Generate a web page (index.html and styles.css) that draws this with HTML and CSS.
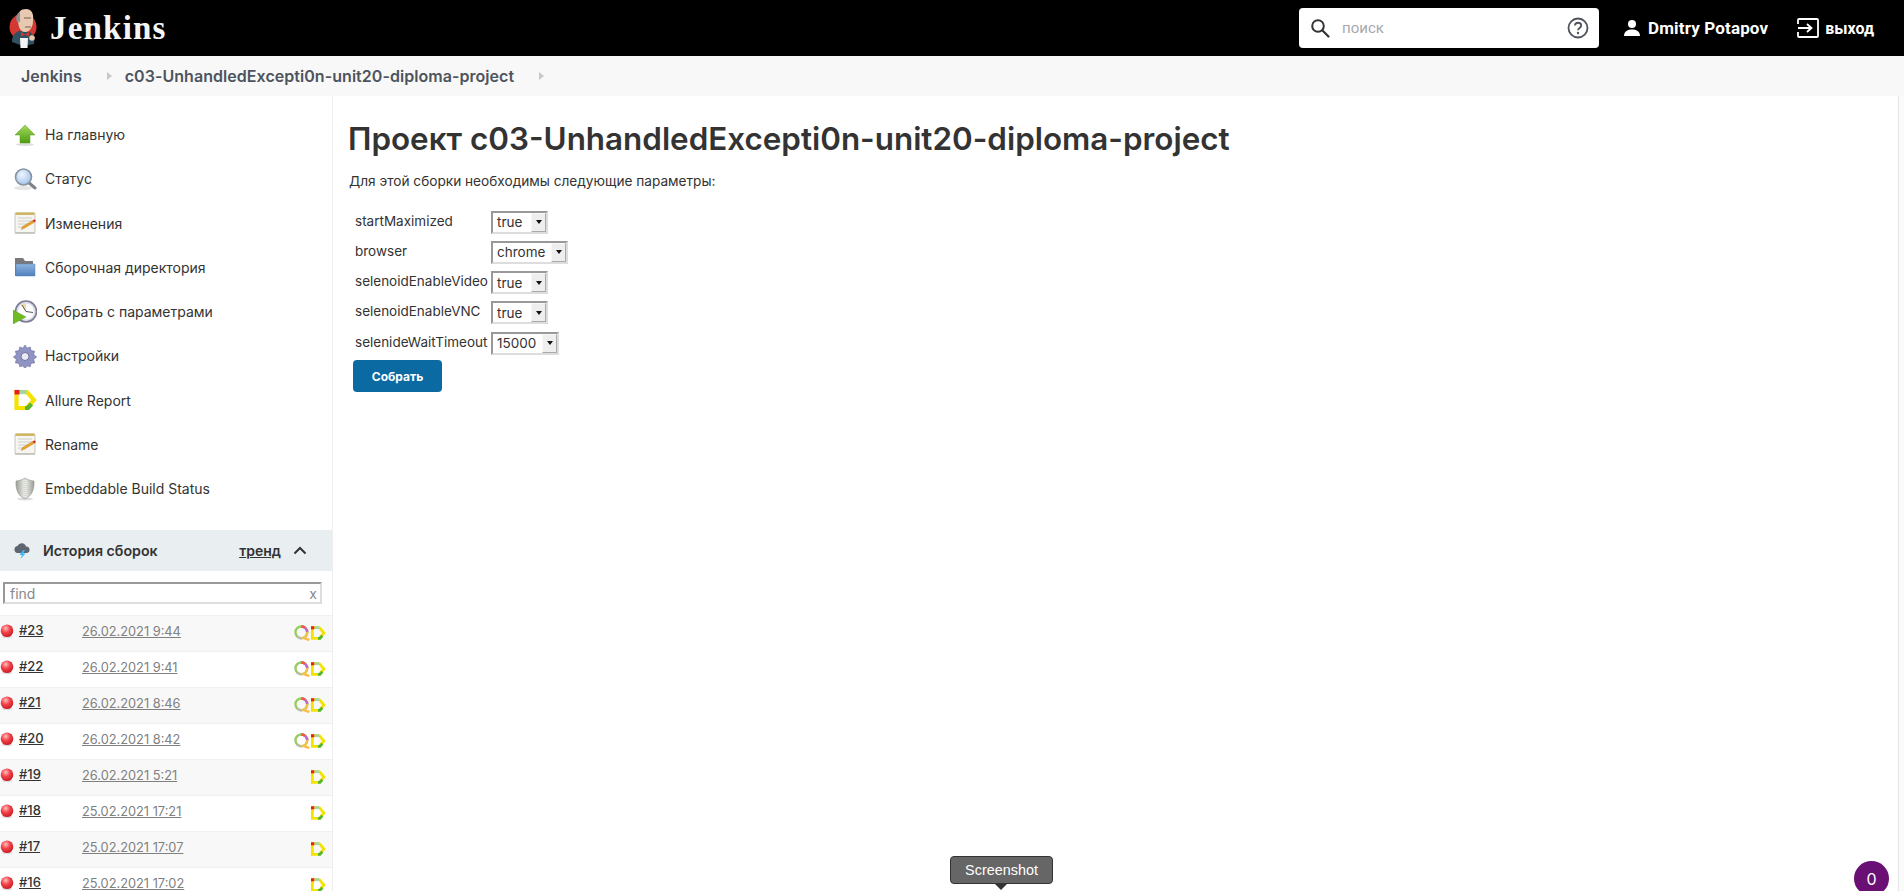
FILE: index.html
```html
<!DOCTYPE html>
<html lang="ru">
<head>
<meta charset="utf-8">
<title>Jenkins</title>
<link rel="stylesheet" href="styles.css">
</head>
<body>
<svg class="defs" aria-hidden="true">
  <defs>
    <linearGradient id="gGreen" x1="0" y1="0" x2="0" y2="1"><stop offset="0" stop-color="#a4dc5c"/><stop offset="1" stop-color="#4f9a12"/></linearGradient>
    <linearGradient id="gFolder" x1="0" y1="0" x2="0" y2="1"><stop offset="0" stop-color="#8eb4e0"/><stop offset="1" stop-color="#4f80bd"/></linearGradient>
    <linearGradient id="gShield" x1="0" y1="0" x2="1" y2="0"><stop offset="0" stop-color="#9a9e95"/><stop offset=".5" stop-color="#eeeeea"/><stop offset="1" stop-color="#9a9e95"/></linearGradient>
    <radialGradient id="gBall" cx=".4" cy=".3" r=".75"><stop offset="0" stop-color="#ffc0c0"/><stop offset=".45" stop-color="#f2444a"/><stop offset="1" stop-color="#c4181e"/></radialGradient>
    <radialGradient id="gLens" cx=".4" cy=".35" r=".7"><stop offset="0" stop-color="#eef6ff"/><stop offset="1" stop-color="#9fc0ea"/></radialGradient>
    <symbol id="i-up" viewBox="0 0 24 24"><ellipse cx="12" cy="21.5" rx="9" ry="1.5" fill="#ddd"/><path d="M12 2 L22 12 H17 V20 H7 V12 H2 Z" fill="url(#gGreen)" stroke="#5a9e1c" stroke-width=".5"/></symbol>
    <symbol id="i-search" viewBox="0 0 24 24"><ellipse cx="10" cy="21" rx="9" ry="2" fill="#e6e6e6"/><path d="M15 15 L22 21" stroke="#7d8288" stroke-width="3" stroke-linecap="round"/><circle cx="10.500" cy="10" r="8" fill="url(#gLens)" stroke="#8a949f" stroke-width="1.600"/></symbol>
    <symbol id="i-notes" viewBox="0 0 24 24"><rect x="2" y="2" width="20" height="20" rx="1" fill="#f6f5ef" stroke="#b3b1a6" stroke-width=".7"/><rect x="2.500" y="1.500" width="19" height="2.400" fill="#cdb45c"/><path d="M5 7h14M5 10h14M5 13h10M5 16h6" stroke="#c4c4c4" stroke-width=".8"/><path d="M8 18.500 L9.500 15.500 L19.500 9.500 L21 11.500 L11 17.500 Z" fill="#e8a12c" stroke="#a5761f" stroke-width=".3"/><path d="M19.500 9.500 L21 11.500 L23 10 L21.500 8.200 Z" fill="#d4312a"/><rect x="2" y="21" width="20" height="1.800" fill="#c5c5c0"/></symbol>
    <symbol id="i-folder" viewBox="0 0 24 24"><path d="M2 3 H10 L12 6 H20 V21 H2 Z" fill="#77797c"/><path d="M3 9 H22 V21 H3 Z" fill="url(#gFolder)" stroke="#5d86ba" stroke-width=".5"/></symbol>
    <symbol id="i-clock" viewBox="0 0 24 24"><circle cx="13" cy="11.500" r="10.500" fill="#dcdbe8" stroke="#7c7a95" stroke-width="1.600"/><circle cx="13" cy="11.500" r="8" fill="#fdfdfd"/><path d="M13 11.500 L8 5 A8 8 0 0 1 13 3.500 Z" fill="#f1dca0"/><path d="M13 11.500 L9 5 M13 11.500 L20 12.500" stroke="#555" stroke-width="1"/><path d="M0 10 L13 17 L0 24 Z" fill="#6fbb22" stroke="#4f9412" stroke-width=".4"/></symbol>
    <symbol id="i-gear" viewBox="0 0 24 24"><path d="M12 1 l2 3.200 3.200-1.200 .8 3.600 3.600 .6 -1 3.400 3 2.400 -3 2.400 1 3.400 -3.600 .6 -.8 3.400 -3.200-1 -2 2.800 -2-2.800 -3.200 1 -.8-3.400 -3.600-.6 1-3.400 -3-2.400 3-2.400 -1-3.400 3.600-.6 .8-3.600 3.200 1.200 Z" fill="#9094c4" stroke="#666a94" stroke-width=".6"/><circle cx="12" cy="12.500" r="4" fill="#e9e9f5" stroke="#6d7098"/></symbol>
    <symbol id="i-allure" viewBox="0 0 24 24"><path d="M3.500 4 H14 L21 12 L14 20 H3.500 Z" fill="none" stroke="#f6e200" stroke-width="4.200"/><path d="M1.500 1.900 H6.500 V6.500 H1.500 Z" fill="#e8201c"/><path d="M7 4 H13.500" stroke="#a5d6a0" stroke-width="4.200"/><path d="M12 20 H15 L18.500 16" fill="none" stroke="#5cb531" stroke-width="4.200"/></symbol>
    <symbol id="i-ring" viewBox="0 0 24 24"><circle cx="11" cy="11" r="8.800" fill="none" stroke="#9acb5e" stroke-width="3.600"/><path d="M5 17.500 A8.800 8.800 0 0 0 11 19.800" fill="none" stroke="#bbb" stroke-width="3.600"/><path d="M11 2.200 A8.800 8.800 0 0 1 19.800 11" fill="none" stroke="#c864c8" stroke-width="3.600"/><path d="M11 2.200 A8.800 8.800 0 0 1 16 3.800" fill="none" stroke="#ee5a3c" stroke-width="3.600"/><path d="M19.800 11 A8.800 8.800 0 0 1 14 19.400 L23 22.500" fill="none" stroke="#f6c04a" stroke-width="3.600"/></symbol>
    <symbol id="i-shield" viewBox="0 0 24 24"><ellipse cx="12" cy="22" rx="8" ry="1.400" fill="#ddd"/><path d="M12 1 C15 3 18 3.600 21 4 C21.500 12 19 19 12 22 C5 19 2.500 12 3 4 C6 3.600 9 3 12 1 Z" fill="url(#gShield)" stroke="#8f9389" stroke-width=".6"/><path d="M12 2 V21" stroke="#aaa" stroke-width=".6" stroke-dasharray="1 1"/></symbol>
    <symbol id="i-weather" viewBox="0 0 18 16"><path d="M4 10 A3.600 3.600 0 0 1 4.500 3 A4.500 4.500 0 0 1 13 3.500 A3.300 3.300 0 0 1 14 10 Z" fill="#5d6670"/><path d="M10 7 L6.500 12 H9 L7.500 16 L12.500 10.500 H10 L12 7 Z" fill="#3fb7f2"/></symbol>
    <symbol id="i-ball" viewBox="0 0 14 14"><ellipse cx="7" cy="13" rx="5.500" ry="1" fill="#ddd"/><circle cx="7" cy="6.800" r="6.300" fill="url(#gBall)"/></symbol>
  </defs>
</svg>
<div class="page">
  <header class="topbar">
    <div class="brand">
      <svg class="butler" viewBox="0 0 30 40" aria-hidden="true">
        <circle cx="14" cy="19" r="13.500" fill="#d33833"/>
        <path d="M3 34 C3 28 5 25 10 23 L21 24 C25 27 26 31 25 36 L14 38 Z" fill="#335061"/>
        <path d="M9 11 C8 4 12 1 17 1 C23 1 25 6 24 13 C24 19 21 24 16 24 C11 24 9 18 9 11 Z" fill="#e6c9b0"/>
        <path d="M8 14 C6 9 8 5 11 4 L11 14 Z" fill="#8f8f8f"/>
        <path d="M15 10 H22 M16 19 H22" stroke="#7a5a4a" stroke-width="1"/>
        <path d="M12 24 L16 26.500 L20 24 L20 28.500 L16 26.500 L12 28.500 Z" fill="#d33833"/>
        <path d="M11 30 H19 L18.500 40 H11.500 Z" fill="#f4f4f4"/>
        <circle cx="23" cy="30" r="2.800" fill="#e6c9b0"/>
      </svg>
      <span class="wordmark">Jenkins</span>
    </div>
    <div class="search">
      <svg class="search-ico" viewBox="0 0 20 20" aria-hidden="true"><circle cx="8" cy="8" r="5.800" fill="none" stroke="#333" stroke-width="2"/><path d="M12.500 12.500 L18.500 18.500" stroke="#333" stroke-width="2.200" stroke-linecap="round"/></svg>
      <span class="search-ph">поиск</span>
      <svg class="help-ico" viewBox="0 0 22 22" aria-hidden="true"><circle cx="11" cy="11" r="9.500" fill="none" stroke="#4d545d" stroke-width="1.800"/><path d="M8 8.500 C8 4.800 14.200 4.800 14.200 8.500 C14.200 11 11 10.800 11 13.300" fill="none" stroke="#4d545d" stroke-width="1.800"/><circle cx="11" cy="16" r="1.200" fill="#4d545d"/></svg>
    </div>
    <div class="user">
      <svg class="user-ico" viewBox="0 0 18 18" aria-hidden="true"><circle cx="9" cy="5" r="4" fill="#fff"/><path d="M1 17 C1 12 5 10.500 9 10.500 C13 10.500 17 12 17 17 Z" fill="#fff"/></svg>
      <span>Dmitry Potapov</span>
    </div>
    <div class="logout">
      <svg class="logout-ico" viewBox="0 0 22 20" aria-hidden="true"><path d="M1 6 V2 Q1 1 2 1 H20 Q21 1 21 2 V18 Q21 19 20 19 H2 Q1 19 1 18 V14" fill="none" stroke="#fff" stroke-width="1.800"/><path d="M1 10 H14 M10 6 L14.500 10 L10 14" fill="none" stroke="#fff" stroke-width="1.800"/></svg>
      <span>выход</span>
    </div>
  </header>

  <nav class="crumbs">
    <span class="crumb">Jenkins</span>
    <span class="crumb-arrow"></span>
    <span class="crumb">c03-UnhandledExcepti0n-unit20-diploma-project</span>
    <span class="crumb-arrow"></span>
  </nav>

  <div class="body-row">
    <aside class="sidebar">
      <ul class="tasks">
        <li class="task"><svg class="task-ico"><use href="#i-up"/></svg><span>На главную</span></li>
        <li class="task"><svg class="task-ico"><use href="#i-search"/></svg><span>Статус</span></li>
        <li class="task"><svg class="task-ico"><use href="#i-notes"/></svg><span>Изменения</span></li>
        <li class="task"><svg class="task-ico"><use href="#i-folder"/></svg><span>Сборочная директория</span></li>
        <li class="task"><svg class="task-ico"><use href="#i-clock"/></svg><span>Собрать с параметрами</span></li>
        <li class="task"><svg class="task-ico"><use href="#i-gear"/></svg><span>Настройки</span></li>
        <li class="task"><svg class="task-ico"><use href="#i-allure"/></svg><span>Allure Report</span></li>
        <li class="task"><svg class="task-ico"><use href="#i-notes"/></svg><span>Rename</span></li>
        <li class="task"><svg class="task-ico"><use href="#i-shield"/></svg><span>Embeddable Build Status</span></li>
      </ul>

      <div class="history-head">
        <svg class="weather"><use href="#i-weather"/></svg>
        <span class="history-title">История сборок</span>
        <span class="trend">тренд</span>
        <svg class="chevron" viewBox="0 0 14 9" aria-hidden="true"><path d="M1.500 7.500 L7 2 L12.500 7.500" fill="none" stroke="#333" stroke-width="2"/></svg>
      </div>
      <div class="find-wrap"><div class="find"><span>find</span><span>x</span></div></div>

      <div class="builds">
        <div class="build"><svg class="ball"><use href="#i-ball"/></svg><span class="num">#23</span><span class="date">26.02.2021 9:44</span><span class="badges"><svg class="b-ico"><use href="#i-ring"/></svg><svg class="b-ico"><use href="#i-allure"/></svg></span></div>
        <div class="build"><svg class="ball"><use href="#i-ball"/></svg><span class="num">#22</span><span class="date">26.02.2021 9:41</span><span class="badges"><svg class="b-ico"><use href="#i-ring"/></svg><svg class="b-ico"><use href="#i-allure"/></svg></span></div>
        <div class="build"><svg class="ball"><use href="#i-ball"/></svg><span class="num">#21</span><span class="date">26.02.2021 8:46</span><span class="badges"><svg class="b-ico"><use href="#i-ring"/></svg><svg class="b-ico"><use href="#i-allure"/></svg></span></div>
        <div class="build"><svg class="ball"><use href="#i-ball"/></svg><span class="num">#20</span><span class="date">26.02.2021 8:42</span><span class="badges"><svg class="b-ico"><use href="#i-ring"/></svg><svg class="b-ico"><use href="#i-allure"/></svg></span></div>
        <div class="build"><svg class="ball"><use href="#i-ball"/></svg><span class="num">#19</span><span class="date">26.02.2021 5:21</span><span class="badges"><svg class="b-ico"><use href="#i-allure"/></svg></span></div>
        <div class="build"><svg class="ball"><use href="#i-ball"/></svg><span class="num">#18</span><span class="date">25.02.2021 17:21</span><span class="badges"><svg class="b-ico"><use href="#i-allure"/></svg></span></div>
        <div class="build"><svg class="ball"><use href="#i-ball"/></svg><span class="num">#17</span><span class="date">25.02.2021 17:07</span><span class="badges"><svg class="b-ico"><use href="#i-allure"/></svg></span></div>
        <div class="build"><svg class="ball"><use href="#i-ball"/></svg><span class="num">#16</span><span class="date">25.02.2021 17:02</span><span class="badges"><svg class="b-ico"><use href="#i-allure"/></svg></span></div>
      </div>
    </aside>

    <main class="content">
      <h1 class="title">Проект c03-UnhandledExcepti0n-unit20-diploma-project</h1>
      <p class="lead">Для этой сборки необходимы следующие параметры:</p>
      <div class="params">
        <span class="p-label">startMaximized</span>
        <div class="select"><span class="s-value">true</span><span class="s-btn"></span></div>
        <span class="p-label">browser</span>
        <div class="select"><span class="s-value">chrome</span><span class="s-btn"></span></div>
        <span class="p-label">selenoidEnableVideo</span>
        <div class="select"><span class="s-value">true</span><span class="s-btn"></span></div>
        <span class="p-label">selenoidEnableVNC</span>
        <div class="select"><span class="s-value">true</span><span class="s-btn"></span></div>
        <span class="p-label">selenideWaitTimeout</span>
        <div class="select"><span class="s-value">15000</span><span class="s-btn"></span></div>
      </div>
      <button class="build-btn" type="button">Собрать</button>
    </main>
    <div class="scrollbar"></div>
  </div>

  <div class="tooltip">Screenshot</div>
  <div class="counter">0</div>
</div>
</body>
</html>
```
FILE: styles.css
```css
* { box-sizing: border-box; }
html, body { margin: 0; padding: 0; height: 100%; overflow: hidden; background: #fff; }
body { font-family: Inter, "Noto Sans", sans-serif; font-size: 14px; color: #333; }
.defs { display: block; width: 0; height: 0; }
.page { position: relative; height: 891px; display: flex; flex-direction: column; overflow: hidden; }

.topbar { flex: 0 0 56px; background: #000; display: flex; align-items: center; padding-left: 9px; color: #fff; }
.brand { display: flex; align-items: center; gap: 11px; margin-right: auto; }
.butler { width: 30px; height: 40px; }
.wordmark { font-family: "Liberation Serif", serif; font-weight: 700; font-size: 33px; letter-spacing: 1.2px; color: #f5f5f5; }
.search { width: 300px; height: 40px; background: #fff; border-radius: 4px; display: flex; align-items: center; padding: 0 10px 0 11px; margin-right: 24px; }
.search-ico { width: 20px; height: 20px; margin-right: 12px; }
.search-ph { flex: 1; font-family: Roboto, sans-serif; font-size: 15px; color: #a8a8ad; }
.help-ico { width: 22px; height: 22px; }
.user { display: flex; align-items: center; gap: 7px; font-family: Roboto, sans-serif; font-weight: 700; font-size: 17px; letter-spacing: .15px; margin-right: 29px; }
.user-ico { width: 18px; height: 18px; }
.logout { display: flex; align-items: center; gap: 6px; font-family: Roboto, sans-serif; font-weight: 700; font-size: 16px; margin-right: 30px; }
.logout-ico { width: 22px; height: 20px; }

.crumbs { flex: 0 0 40px; background: #f8f8f8; display: flex; align-items: center; padding-left: 21px; font-size: 16px; font-weight: 600; color: #4d545d; }
.crumb { letter-spacing: .05px; }
.crumb-arrow { width: 0; height: 0; margin: 0 13px 0 25px; border-left: 5px solid #c9c9c9; border-top: 4px solid transparent; border-bottom: 4px solid transparent; }

.body-row { flex: 1; min-height: 0; display: flex; }
.sidebar { flex: 0 0 333px; border-right: 1px solid #eee; overflow: hidden; }
.tasks { list-style: none; margin: 0; padding: 16.5px 0 0; }
.task { height: 44.25px; display: flex; align-items: center; padding-left: 13px; gap: 8px; color: #333; }
.task-ico { width: 24px; height: 24px; flex: none; }

.history-head { height: 41px; margin-top: 19.5px; background: #e9eef1; display: flex; align-items: center; padding: 0 25px 0 13px; font-weight: 600; }
.weather { width: 18px; height: 16px; margin-right: 12px; }
.history-title { margin-right: auto; font-size: 14.2px; }
.trend { text-decoration: underline; margin-right: 12px; }
.chevron { width: 14px; height: 9px; }
.find-wrap { padding: 11px 10px 11px 3px; }
.find { height: 22px; border: 2px solid; border-color: #999 #ddd #ddd #999; display: flex; justify-content: space-between; align-items: center; padding: 0 3px 0 5px; color: #888; }

.build { height: 36px; display: flex; align-items: center; border-top: 1px solid #eef0f1; padding: 0 6px 5px 0; }
.build:nth-child(odd) { background: #f8f8f8; }
.ball { width: 14px; height: 14px; flex: none; margin-right: 5px; }
.num { width: 63px; font-size: 13px; font-weight: 500; text-decoration: underline; color: #333; margin-top: -3px; }
.date { flex: 1; font-size: 12.8px; color: #808080; text-decoration: underline; }
.badges { display: flex; align-items: center; margin-top: 4px; }
.b-ico { width: 16px; height: 16px; }

.content { flex: 1; min-width: 0; padding: 23px 0 0 15px; }
.title { margin: 0; font-size: 31.4px; line-height: 40px; font-weight: 600; color: #333; }
.lead { margin: 12px 0 0 1px; line-height: 20px; font-size: 13.65px; }
.params { display: grid; grid-template-columns: 136px auto; grid-auto-rows: 30.250px; justify-content: start; justify-items: start; align-items: center; margin: 16px 0 0 7px; font-size: 13.5px; }
.p-label { margin-top: -3px; white-space: nowrap; }
.select { min-width: 57px; height: 23px; display: flex; align-items: center; border: 2px solid; border-color: #999 #ddd #ddd #999; background: #fff; padding-left: 4px; }
.s-value { flex: 1; padding-right: 6px; }
.s-btn { width: 15px; height: 19px; background: #eee; border: 1px solid; border-color: #f8f8f8 #aaa #aaa #f8f8f8; display: flex; align-items: center; justify-content: center; }
.s-btn::after { content: ""; border-top: 4px solid #111; border-left: 3px solid transparent; border-right: 3px solid transparent; }
.build-btn { display: block; margin: 2px 0 0 5px; width: 89px; height: 32px; background: #0b6aa2; color: #fff; border: 0; border-radius: 4px; font-family: inherit; font-size: 12px; font-weight: 700; }

.scrollbar { flex: 0 0 6px; border-left: 1px solid #e6e6e6; background: #fafafa; }

.tooltip { position: absolute; left: 950px; top: 856px; width: 103px; height: 28px; background: #666; border: 1px solid #333; border-radius: 4px; color: #fff; font-family: "Liberation Sans", sans-serif; font-size: 14.4px; display: flex; align-items: center; justify-content: center; }
.tooltip::after { content: ""; position: absolute; left: 43px; top: 26px; border-top: 7px solid #333; border-left: 7px solid transparent; border-right: 7px solid transparent; }
.counter { position: absolute; left: 1854px; top: 861px; width: 35px; height: 35px; border-radius: 50%; background: #6a0f74; color: #fff; font-size: 16px; display: flex; align-items: center; justify-content: center; }
```
